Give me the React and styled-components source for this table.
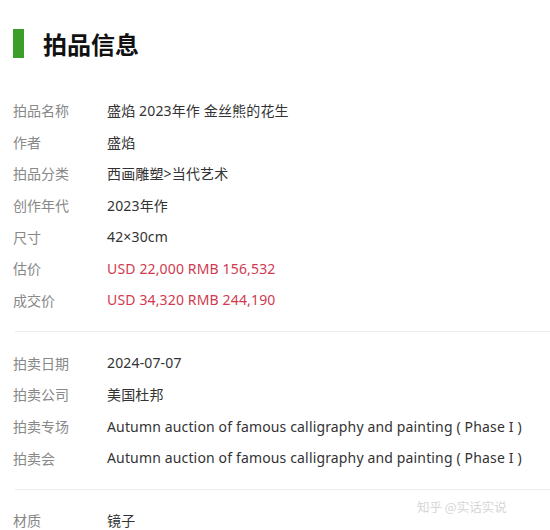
import React from "react";
import styled, { createGlobalStyle } from "styled-components";

const Global = createGlobalStyle`
  html, body { margin: 0; padding: 0; background: #fff; }
  body { font-family: "Segoe UI", "Noto Sans", "Noto Sans CJK SC", sans-serif; overflow: hidden; }
`;

const Page = styled.div`
  width: 550px;
  height: 530px;
  padding: 29px 0 0 13px;
  box-sizing: border-box;
  position: relative;
  overflow: hidden;
`;

const Header = styled.div`
  display: flex;
  align-items: center;
  gap: 19px;
  height: 29px;
  margin-bottom: 36px;
`;

const Bar = styled.span`
  width: 11px;
  height: 29px;
  background: #3b9e2b;
`;

const Title = styled.h2`
  margin: 0;
  font-size: 24px;
  font-weight: 700;
  color: #111;
  font-family: "Noto Sans CJK SC", sans-serif;
  line-height: 29px;
`;

const Section = styled.div`
  padding: ${(p) => (p.$first ? "0 0 15px" : "15px 0")};
  border-bottom: ${(p) => (p.$last ? "none" : "1px solid #ececec")};
  margin-left: 2px;
`;

const Row = styled.div`
  display: grid;
  grid-template-columns: 94px 1fr;
  height: 31.7px;
  align-items: center;
  font-size: 14px;
  margin-left: -2px;
`;

const Label = styled.span`
  color: #888;
`;

const Value = styled.span`
  color: ${(p) => (p.$red ? "#d03a50" : "#333")};
  white-space: nowrap;
  letter-spacing: 0.15px;
`;

const Watermark = styled.div`
  position: absolute;
  left: 417px;
  top: 497px;
  font-size: 12.5px;
  color: #d6d6d6;
  font-family: "Noto Sans CJK SC", sans-serif;
`;

const s1 = [
  ["拍品名称", "盛焰 2023年作 金丝熊的花生"],
  ["作者", "盛焰"],
  ["拍品分类", "西画雕塑>当代艺术"],
  ["创作年代", "2023年作"],
  ["尺寸", "42×30cm"],
  ["估价", "USD 22,000 RMB 156,532", true],
  ["成交价", "USD 34,320 RMB 244,190", true],
];

const s2 = [
  ["拍卖日期", "2024-07-07"],
  ["拍卖公司", "美国杜邦"],
  ["拍卖专场", "Autumn auction of famous calligraphy and painting ( Phase I )"],
  ["拍卖会", "Autumn auction of famous calligraphy and painting ( Phase I )"],
];

const s3 = [["材质", "镜子"]];

const renderRows = (rows) =>
  rows.map(([l, v, red]) => (
    <Row key={l}>
      <Label>{l}</Label>
      <Value $red={red}>{v}</Value>
    </Row>
  ));

export default function App() {
  return (
    <>
      <Global />
      <Page>
        <Header>
          <Bar />
          <Title>拍品信息</Title>
        </Header>
        <Section $first>{renderRows(s1)}</Section>
        <Section>{renderRows(s2)}</Section>
        <Section $last>{renderRows(s3)}</Section>
        <Watermark>知乎 @实话实说</Watermark>
      </Page>
    </>
  );
}
